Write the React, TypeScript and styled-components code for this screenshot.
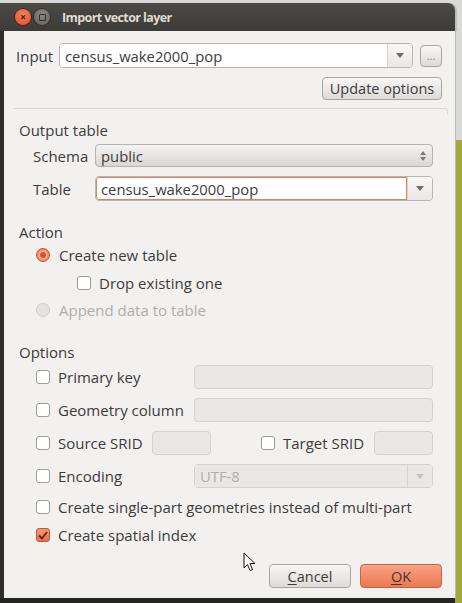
import React from "react";
import styled, { createGlobalStyle } from "styled-components";

const Global = createGlobalStyle`
  html, body { margin: 0; padding: 0; }
  body { font-family: "Open Sans", "DejaVu Sans", sans-serif; }
`;

const Screen = styled.div`
  position: relative;
  width: 462px;
  height: 603px;
  overflow: hidden;
  background: linear-gradient(to bottom, #d9d9d7 0, #d9d9d7 140px, #a3a742 140px);
  padding-top: 3px;
  box-sizing: border-box;
`;

const Window = styled.div`
  width: 455px;
  height: 600px;
  display: flex;
  flex-direction: column;
  box-sizing: border-box;
  border-bottom: 5px solid #242422;
`;

const TitleBar = styled.div`
  height: 28px;
  background: linear-gradient(to bottom, #4b4a45, #3c3b37);
  border-radius: 0 7px 0 0;
  display: flex;
  align-items: center;
  padding-left: 15px;
  gap: 2px;
  box-shadow: 2px 0 0 #bdbdbb;
`;

const CloseBtn = styled.div`
  width: 16px;
  height: 16px;
  border-radius: 50%;
  background: radial-gradient(circle at 50% 35%, #f6825a, #df4d22);
  box-shadow: 0 0 0 1px #3a2a22;
  display: flex;
  align-items: center;
  justify-content: center;
  color: #4a1a0c;
  font-size: 10px;
  font-weight: bold;
  line-height: 1;
`;

const MinBtn = styled.div`
  width: 16px;
  height: 16px;
  margin-left: 1px;
  border-radius: 50%;
  background: radial-gradient(circle at 50% 35%, #8a8984, #5e5d58);
  box-shadow: 0 0 0 1px #2c2b28;
  display: flex;
  align-items: center;
  justify-content: center;
  &::after {
    content: "";
    width: 7px;
    height: 7px;
    border: 1px solid #2f2e2b;
    box-sizing: border-box;
    border-radius: 1px;
  }
`;

const Title = styled.div`
  margin-left: 10px;
  color: #dfdbd2;
  font-weight: bold;
  font-size: 12.5px;
  letter-spacing: -0.6px;
`;

const Body = styled.div`
  flex: 1;
  background: #f2f1f0;
  border-left: 4px solid #2e2d2b;
  display: flex;
  flex-direction: column;
  padding: 12px 13px 0 12px;
  color: #3c3c3c;
  font-size: 15px;
  box-shadow: 1px 0 0 #b9b8b5;
`;

const Row = styled.div<{ $h: number; $mt: number; $indent?: number }>`
  display: flex;
  align-items: center;
  height: ${(p) => p.$h}px;
  margin-top: ${(p) => p.$mt}px;
  padding-left: ${(p) => p.$indent ?? 0}px;
  flex-shrink: 0;
`;

const Label = styled.span<{ $w?: number; $disabled?: boolean }>`
  ${(p) => (p.$w ? `width: ${p.$w}px; flex-shrink: 0;` : "")}
  color: ${(p) => (p.$disabled ? "#b0aeab" : "#3c3c3c")};
  white-space: nowrap;
`;

const Combo = styled.div<{ $w: number; $disabled?: boolean }>`
  width: ${(p) => p.$w}px;
  height: 100%;
  box-sizing: border-box;
  display: flex;
  border: 1px solid ${(p) => (p.$disabled ? "#d4d2ce" : "#b8b6b2")};
  border-radius: 4px;
  background: #fff;
  overflow: hidden;
`;

const ComboText = styled.div<{ $focus?: boolean; $disabled?: boolean }>`
  flex: 1;
  display: flex;
  align-items: center;
  padding-left: 5px;
  color: ${(p) => (p.$disabled ? "#b0aeab" : "#3c3c3c")};
  font-size: 14.8px;
  background: ${(p) => (p.$disabled ? "#e9e8e6" : "#fff")};
  ${(p) => (p.$focus ? "box-shadow: inset 0 0 0 1px #e0825f; border-radius: 3px 0 0 3px;" : "")}
`;

const ComboArrow = styled.div<{ $disabled?: boolean }>`
  width: 24px;
  display: flex;
  align-items: center;
  justify-content: center;
  border-left: 1px solid #d6d4d0;
  background: ${(p) =>
    p.$disabled ? "#e9e8e6" : "linear-gradient(to bottom, #f9f8f7, #e8e7e5)"};
  &::after {
    content: "";
    border-left: 4px solid transparent;
    border-right: 4px solid transparent;
    border-top: 5px solid ${(p) => (p.$disabled ? "#c5c3bf" : "#6d6c68")};
  }
`;

const SpinCombo = styled.div<{ $w: number }>`
  width: ${(p) => p.$w}px;
  height: 100%;
  box-sizing: border-box;
  border: 1px solid #b5b3af;
  border-radius: 4px;
  background: linear-gradient(to bottom, #f4f3f1, #dad8d5);
  display: flex;
  align-items: center;
  padding: 0 6px 0 5px;
  justify-content: space-between;
  font-size: 14.8px;
`;

const UpDown = styled.div`
  display: flex;
  flex-direction: column;
  gap: 2px;
  &::before,
  &::after {
    content: "";
    border-left: 3px solid transparent;
    border-right: 3px solid transparent;
  }
  &::before { border-bottom: 4px solid #7c7b77; }
  &::after { border-top: 4px solid #7c7b77; }
`;

const Button = styled.div<{ $w: number; $primary?: boolean }>`
  width: ${(p) => p.$w}px;
  height: 100%;
  box-sizing: border-box;
  border-radius: 4px;
  border: 1px solid ${(p) => (p.$primary ? "#c9643f" : "#a8a6a2")};
  background: ${(p) =>
    p.$primary
      ? "linear-gradient(to bottom, #f8a284, #ec7853)"
      : "linear-gradient(to bottom, #f8f7f6, #dddbd8)"};
  color: ${(p) => (p.$primary ? "#4d3429" : "#3c3c3c")};
  display: flex;
  align-items: center;
  justify-content: center;
  font-size: 14.5px;
  flex-shrink: 0;
`;

const SmallButton = styled(Button)`
  height: 22px;
  color: #8a8884;
  font-size: 11px;
`;

const Spacer = styled.div<{ $w?: number }>`
  ${(p) => (p.$w ? `width: ${p.$w}px; flex-shrink: 0;` : "flex: 1;")}
`;

const GroupLine = styled.div`
  margin-top: 8px;
  margin-left: -3px;
  width: 434px;
  height: 6px;
  border-top: 1px solid #dcdad6;
  border-right: 1px solid #dcdad6;
  border-top-right-radius: 4px;
  flex-shrink: 0;
  margin-bottom: -6px;
`;

const SectionTitle = styled(Row)`
  padding-left: 3px;
`;

const Radio = styled.div<{ $checked?: boolean; $disabled?: boolean }>`
  width: 14px;
  height: 14px;
  border-radius: 50%;
  box-sizing: border-box;
  flex-shrink: 0;
  margin-right: 9px;
  border: 1px solid ${(p) => (p.$checked ? "#c4572f" : p.$disabled ? "#cfcdca" : "#9e9c98")};
  background: ${(p) =>
    p.$checked
      ? "radial-gradient(circle, #d6532a 0, #d6532a 2.5px, #f7b59c 3.5px, #f2916e 5px, #e7724b 7px)"
      : p.$disabled
      ? "#e4e3e0"
      : "#fff"};
`;

const Check = styled.div<{ $checked?: boolean }>`
  width: 14px;
  height: 14px;
  box-sizing: border-box;
  border-radius: 3px;
  flex-shrink: 0;
  margin-right: 8px;
  border: 1px solid ${(p) => (p.$checked ? "#c4572f" : "#9e9c98")};
  background: ${(p) => (p.$checked ? "linear-gradient(to bottom, #f49a78, #e8714a)" : "#fff")};
  display: flex;
  align-items: center;
  justify-content: center;
`;

const Field = styled.div<{ $w: number }>`
  width: ${(p) => p.$w}px;
  height: 100%;
  box-sizing: border-box;
  border: 1px solid #d4d2ce;
  border-radius: 4px;
  background: #e9e8e6;
  flex-shrink: 0;
`;

const Cursor = styled.svg`
  position: absolute;
  left: 243px;
  top: 552px;
`;

const U = styled.span`
  text-decoration: underline;
  text-underline-offset: 2px;
`;

export default function App() {
  return (
    <>
      <Global />
      <Screen>
        <Window>
          <TitleBar>
            <CloseBtn>×</CloseBtn>
            <MinBtn />
            <Title>Import vector layer</Title>
          </TitleBar>
          <Body>
            <Row $h={25} $mt={0}>
              <Label $w={43}>Input</Label>
              <Combo $w={354}>
                <ComboText>census_wake2000_pop</ComboText>
                <ComboArrow />
              </Combo>
              <Spacer $w={7} />
              <SmallButton $w={22}>...</SmallButton>
            </Row>
            <Row $h={23} $mt={9}>
              <Spacer />
              <Button $w={120}>Update options</Button>
            </Row>
            <GroupLine />
            <SectionTitle $h={20} $mt={11}>Output table</SectionTitle>
            <Row $h={23} $mt={4} $indent={17}>
              <Label $w={62}>Schema</Label>
              <SpinCombo $w={338}>
                <span>public</span>
                <UpDown />
              </SpinCombo>
            </Row>
            <Row $h={25} $mt={9} $indent={17}>
              <Label $w={62}>Table</Label>
              <Combo $w={338}>
                <ComboText $focus>census_wake2000_pop</ComboText>
                <ComboArrow />
              </Combo>
            </Row>
            <SectionTitle $h={20} $mt={21}>Action</SectionTitle>
            <Row $h={20} $mt={3} $indent={20}>
              <Radio $checked />
              <Label>Create new table</Label>
            </Row>
            <Row $h={20} $mt={8} $indent={61}>
              <Check />
              <Label>Drop existing one</Label>
            </Row>
            <Row $h={20} $mt={7} $indent={20}>
              <Radio $disabled />
              <Label $disabled>Append data to table</Label>
            </Row>
            <SectionTitle $h={20} $mt={22}>Options</SectionTitle>
            <Row $h={24} $mt={3} $indent={20}>
              <Check />
              <Label $w={136}>Primary key</Label>
              <Field $w={239} />
            </Row>
            <Row $h={24} $mt={9} $indent={20}>
              <Check />
              <Label $w={136}>Geometry column</Label>
              <Field $w={239} />
            </Row>
            <Row $h={24} $mt={9} $indent={20}>
              <Check />
              <Label $w={94}>Source SRID</Label>
              <Field $w={59} />
              <Spacer $w={50} />
              <Check />
              <Label $w={91}>Target SRID</Label>
              <Field $w={59} />
            </Row>
            <Row $h={24} $mt={9} $indent={20}>
              <Check />
              <Label $w={136}>Encoding</Label>
              <Combo $w={239} $disabled>
                <ComboText $disabled>UTF-8</ComboText>
                <ComboArrow $disabled />
              </Combo>
            </Row>
            <Row $h={20} $mt={9} $indent={20}>
              <Check />
              <Label>Create single-part geometries instead of multi-part</Label>
            </Row>
            <Row $h={20} $mt={8} $indent={20}>
              <Check $checked>
                <svg width="10" height="9" viewBox="0 0 10 9">
                  <path d="M1 4.5 L4 7.5 L9 1" stroke="#5a2a18" strokeWidth="1.8" fill="none" />
                </svg>
              </Check>
              <Label>Create spatial index</Label>
            </Row>
            <Row $h={24} $mt={19}>
              <Spacer />
              <Button $w={82}>
                <U>C</U>ancel
              </Button>
              <Spacer $w={9} />
              <Button $w={82} $primary>
                <U>O</U>K
              </Button>
            </Row>
          </Body>
        </Window>
        <Cursor width="14" height="21" viewBox="0 0 14 21">
          <path
            d="M1 1 L1 16 L4.5 12.5 L7 18.5 L9.5 17.5 L7 11.5 L12 11.5 Z"
            fill="#fff"
            stroke="#111"
            strokeWidth="1"
            strokeLinejoin="round"
          />
        </Cursor>
      </Screen>
    </>
  );
}
